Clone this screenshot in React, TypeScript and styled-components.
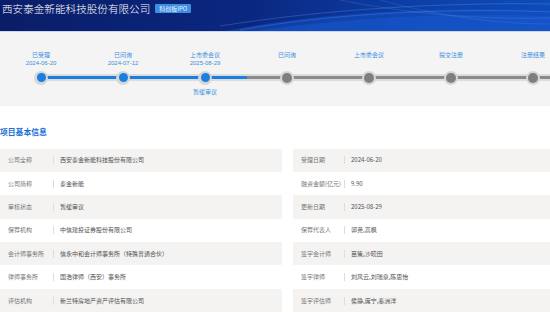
import React from 'react'
import styled, { createGlobalStyle } from 'styled-components'

const GlobalStyle = createGlobalStyle`
    html, body {
        margin: 0;
        padding: 0;
        background: #ffffff;
        font-family: 'Noto Sans CJK SC', 'Noto Sans', sans-serif;
    }
`

const Page = styled.div`
    width: 550px;
    height: 312px;
    overflow: hidden;
    background: #ffffff;
`

const Header = styled.header`
    position: relative;
    height: 32px;
    display: flex;
    align-items: flex-start;
    gap: 5px;
    padding: 1px 0 0 2px;
    box-sizing: border-box;
    background: linear-gradient(90deg, #0a1d68 0%, #0a2780 45%, #0c3fa6 75%, #0e4cba 100%);
    border-bottom: 1px solid #c9d6ee;
    overflow: hidden;
`

const Waves = styled.svg`
    position: absolute;
    right: 0;
    top: 0;
    width: 330px;
    height: 32px;
`

const Title = styled.h1`
    position: relative;
    margin: 0;
    font-size: 10.6px;
    line-height: 15px;
    font-weight: 300;
    color: #ffffff;
`

const Badge = styled.span`
    position: relative;
    margin-top: 3px;
    width: 36px;
    height: 9px;
    background: #3f8de0;
    color: #e8f2ff;
    font-size: 6px;
    line-height: 9px;
    text-align: center;
    border-radius: 1px;
`

const TimelinePanel = styled.section`
    position: relative;
    height: 74px;
    background: #f4f4f4;
    overflow: hidden;
`

const Track = styled.div`
    position: absolute;
    left: 41px;
    right: 0;
    top: 42px;
    height: 7px;
    background: #dcdcdc;
    display: flex;
    align-items: center;
`

const TrackLine = styled.div<{ color: string; width?: number }>`
    height: 3px;
    background: ${p => p.color};
    flex: ${p => (p.width ? `0 0 ${p.width}px` : '1')};
`

const Steps = styled.div`
    position: relative;
    display: grid;
    grid-template-columns: repeat(7, 82px);
    padding-top: 18.5px;
`

const Step = styled.div`
    display: flex;
    flex-direction: column;
    align-items: center;
`

const StepText = styled.div`
    font-size: 6px;
    line-height: 8px;
    height: 8px;
    color: #3b8fe0;
    white-space: nowrap;
`

const StepDate = styled(StepText)`
    font-family: 'Liberation Sans', Arial, sans-serif;
`

const Dot = styled.div<{ active: boolean }>`
    margin-top: 4px;
    width: 14px;
    height: 14px;
    border-radius: 50%;
    background: #d6d6d6;
    display: flex;
    align-items: center;
    justify-content: center;
    &::after {
        content: '';
        width: ${p => (p.active ? 9 : 10)}px;
        height: ${p => (p.active ? 9 : 10)}px;
        border-radius: 50%;
        background: ${p => (p.active ? '#1a7fe0' : '#7f7f7f')};
    }
`

const StepNote = styled(StepText)`
    margin-top: 3.5px;
`

const SectionTitle = styled.h2`
    margin: 21px 0 0;
    height: 9px;
    font-size: 7.8px;
    line-height: 9px;
    font-weight: 700;
    color: #1a6fd6;
`

const Table = styled.div`
    margin-top: 12.5px;
    display: grid;
    grid-template-columns: 282px 257px;
    column-gap: 11px;
`

const Cell = styled.div<{ shaded: boolean; labelWidth: number }>`
    height: 23.4px;
    display: flex;
    align-items: center;
    padding-left: 8px;
    background: ${p => (p.shaded ? '#f4f3f2' : '#ffffff')};
    font-size: 6px;
    line-height: 8px;
    white-space: nowrap;
`

const Label = styled.span<{ width: number }>`
    width: ${p => p.width}px;
    color: #757575;
`

const Divider = styled.i`
    width: 1px;
    height: 8px;
    background: #dddddd;
    margin-right: 6px;
`

const Value = styled.span`
    color: #505050;
`

const steps = [
    { label: '已受理', date: '2024-06-20', active: true },
    { label: '已问询', date: '2024-07-12', active: true },
    { label: '上市委会议', date: '2025-08-29', active: true, note: '暂缓审议' },
    { label: '已问询', active: false },
    { label: '上市委会议', active: false },
    { label: '提交注册', active: false },
    { label: '注册结果', active: false },
]

const left = [
    ['公司全称', '西安泰金新能科技股份有限公司'],
    ['公司简称', '泰金新能'],
    ['审核状态', '暂缓审议'],
    ['保荐机构', '中信建投证券股份有限公司'],
    ['会计师事务所', '信永中和会计师事务所（特殊普通合伙）'],
    ['律师事务所', '国浩律师（西安）事务所'],
    ['评估机构', '新兰特房地产资产评估有限公司'],
]

const right = [
    ['受理日期', '2024-06-20'],
    ['融资金额(亿元)', '9.90'],
    ['更新日期', '2025-08-29'],
    ['保荐代表人', '郭尧,高枫'],
    ['签字会计师', '苗策,沙晓田'],
    ['签字律师', '刘风云,刘瑞泉,陈思怡'],
    ['签字评估师', '侯静,席宁,秦洲洋'],
]

const App = () => {
    return (
        <Page>
            <GlobalStyle />
            <Header>
                <Waves viewBox="0 0 330 32" preserveAspectRatio="none">
                    <path d="M0 32 C 90 14, 200 6, 330 10 L330 32 Z" fill="#1450c4" opacity="0.55" />
                    <path d="M30 32 C 120 18, 230 12, 330 16 L330 32 Z" fill="#1a5ad0" opacity="0.45" />
                    <path d="M0 26 C 100 10, 220 2, 330 4" stroke="#6fa0ff" strokeWidth="0.6" fill="none" opacity="0.5" />
                    <path d="M20 30 C 120 12, 240 8, 330 12" stroke="#8ab4ff" strokeWidth="0.5" fill="none" opacity="0.45" />
                    <path d="M120 0 C 180 12, 250 20, 330 18" stroke="#7aa8ff" strokeWidth="0.5" fill="none" opacity="0.4" />
                    <path d="M160 0 C 210 14, 270 24, 330 24" stroke="#7aa8ff" strokeWidth="0.5" fill="none" opacity="0.35" />
                </Waves>
                <Title>西安泰金新能科技股份有限公司</Title>
                <Badge>科创板IPO</Badge>
            </Header>
            <TimelinePanel>
                <Track>
                    <TrackLine color="#1a7fe0" width={206} />
                    <TrackLine color="#8a8a8a" />
                </Track>
                <Steps>
                    {steps.map((s, i) => (
                        <Step key={i}>
                            <StepText>{s.label}</StepText>
                            <StepDate>{s.date ?? ''}</StepDate>
                            <Dot active={s.active} />
                            {s.note && <StepNote>{s.note}</StepNote>}
                        </Step>
                    ))}
                </Steps>
            </TimelinePanel>
            <SectionTitle>项目基本信息</SectionTitle>
            <Table>
                {left.map((row, i) => (
                    <React.Fragment key={i}>
                        <Cell shaded={i % 2 === 0}>
                            <Label width={45}>{row[0]}</Label>
                            <Divider />
                            <Value>{row[1]}</Value>
                        </Cell>
                        <Cell shaded={i % 2 === 0}>
                            <Label width={43}>{right[i][0]}</Label>
                            <Divider />
                            <Value>{right[i][1]}</Value>
                        </Cell>
                    </React.Fragment>
                ))}
            </Table>
        </Page>
    )
}

export default App
